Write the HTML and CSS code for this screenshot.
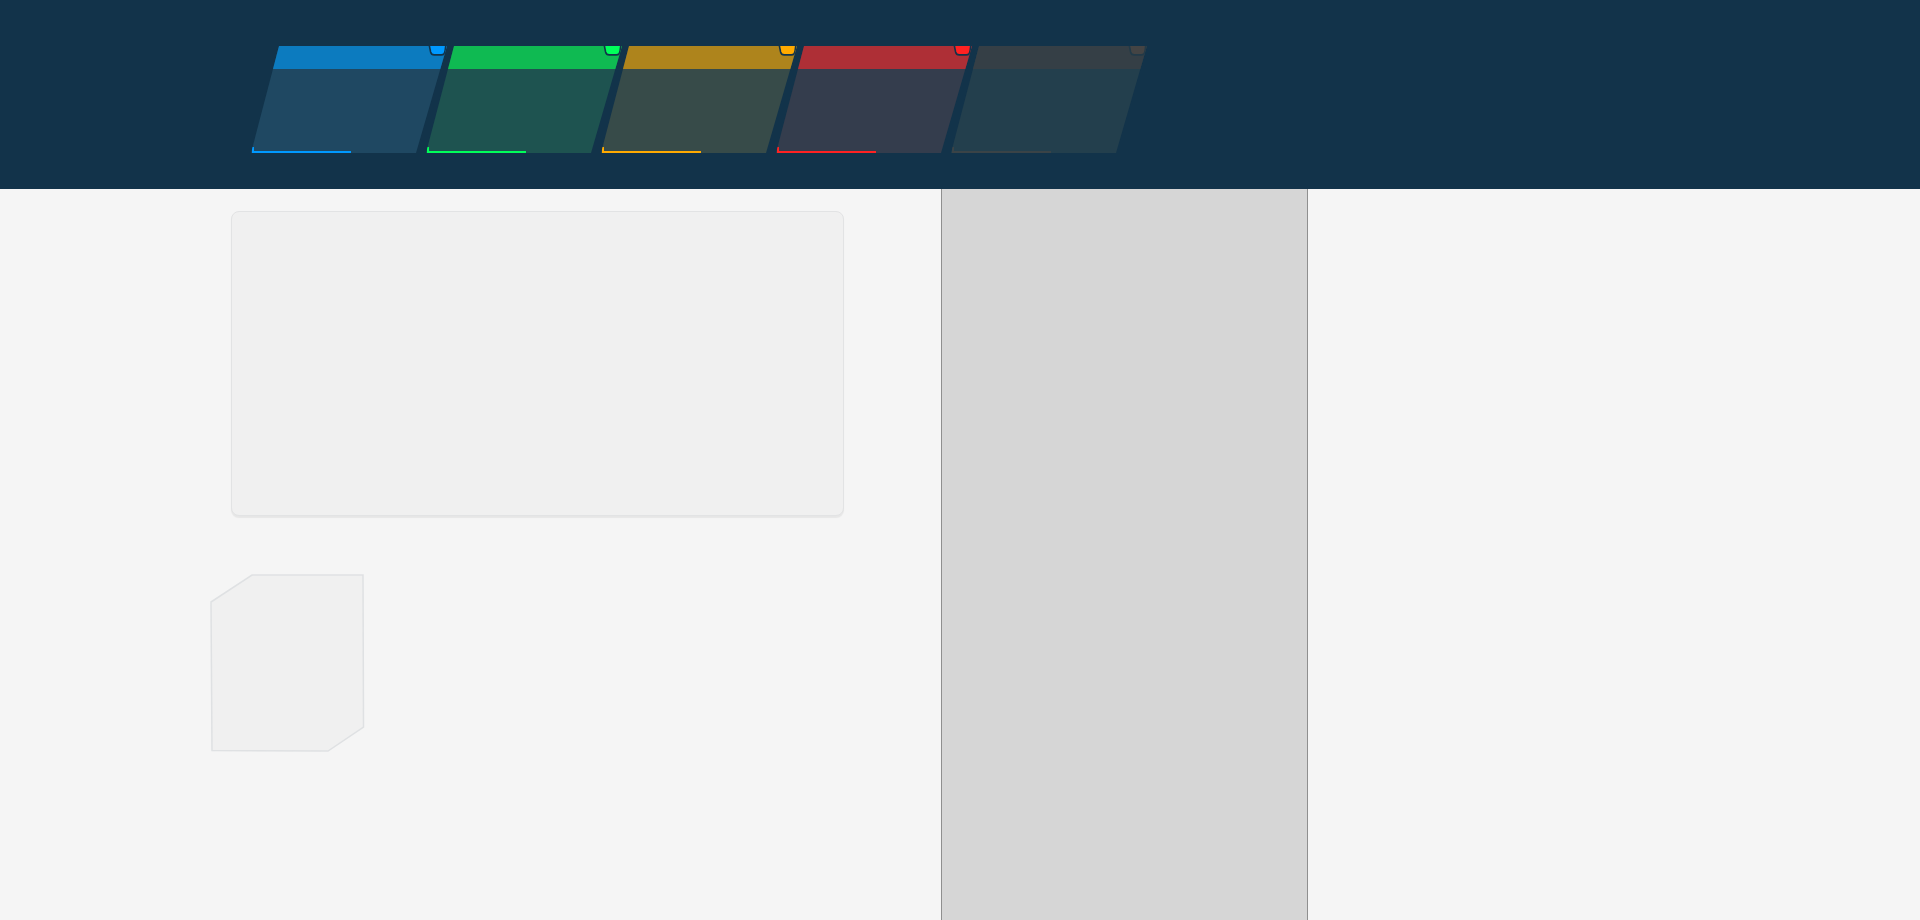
FILE: index.html
```html
<!DOCTYPE html>
<html lang="en">
<head>
<meta charset="utf-8">
<title>Dashboard</title>
<link rel="stylesheet" href="styles.css">
</head>
<body>
<header class="topbar">
  <nav class="tabs">
    <div class="tab tab-blue"><div class="tab-band"></div><svg class="tab-badge" viewBox="0 0 19 10"><path d="M1,-2 L2.6,6 Q3.3,8.9 6.2,8.9 L13.4,8.9 Q16.4,8.9 16.9,6 L18,-2 Z"/></svg><span class="tab-line"></span></div>
    <div class="tab tab-green"><div class="tab-band"></div><svg class="tab-badge" viewBox="0 0 19 10"><path d="M1,-2 L2.6,6 Q3.3,8.9 6.2,8.9 L13.4,8.9 Q16.4,8.9 16.9,6 L18,-2 Z"/></svg><span class="tab-line"></span></div>
    <div class="tab tab-yellow"><div class="tab-band"></div><svg class="tab-badge" viewBox="0 0 19 10"><path d="M1,-2 L2.6,6 Q3.3,8.9 6.2,8.9 L13.4,8.9 Q16.4,8.9 16.9,6 L18,-2 Z"/></svg><span class="tab-line"></span></div>
    <div class="tab tab-red"><div class="tab-band"></div><svg class="tab-badge" viewBox="0 0 19 10"><path d="M1,-2 L2.6,6 Q3.3,8.9 6.2,8.9 L13.4,8.9 Q16.4,8.9 16.9,6 L18,-2 Z"/></svg><span class="tab-line"></span></div>
    <div class="tab tab-grey"><div class="tab-band"></div><svg class="tab-badge" viewBox="0 0 19 10"><path d="M1,-2 L2.6,6 Q3.3,8.9 6.2,8.9 L13.4,8.9 Q16.4,8.9 16.9,6 L18,-2 Z"/></svg><span class="tab-line"></span></div>
  </nav>
</header>
<main class="layout">
  <section class="content">
    <div class="card"></div>
    <svg class="shape" width="156" height="178" viewBox="0 0 156 178">
      <polygon points="1,28 42,1 86,1 153,1 153.5,153 118,177 2,176.5" fill="#f0f0f0" stroke="#dfe1e3" stroke-width="1.5"/>
    </svg>
  </section>
  <aside class="sidebar"></aside>
  <section class="rest"></section>
</main>
</body>
</html>
```
FILE: styles.css
```css
html, body {
  margin: 0;
  padding: 0;
  height: 100%;
}
body {
  background: #f5f5f5;
  font-family: "Liberation Sans", Arial, sans-serif;
  display: flex;
  flex-direction: column;
  overflow: hidden;
}
.topbar {
  height: 189px;
  background: #12334a;
  flex: none;
  box-sizing: border-box;
  padding: 46px 0 0 251px;
}
.tabs {
  display: flex;
}
.tab {
  position: relative;
  flex: none;
  width: 196px;
  height: 107px;
  margin-right: -21px;
  clip-path: polygon(28px 0, 196px 0, 165px 107px, 0 107px);
}
.tab-band {
  height: 23px;
}
.tab-badge {
  position: absolute;
  top: 0;
  right: 0;
  width: 19px;
  height: 10px;
  stroke: #12334a;
  stroke-width: 1.6;
}
.tab-line {
  position: absolute;
  left: 1px;
  bottom: 0;
  width: 99px;
  height: 6px;
  box-sizing: border-box;
  border-left: 2px solid;
  border-bottom: 2px solid;
}
.tab-blue { background: #1f4862; }
.tab-blue .tab-band { background: #0c7bbf; }
.tab-blue .tab-badge { fill: #0099ff; }
.tab-blue .tab-line { border-color: #0099ff; }
.tab-green { background: #1e5350; }
.tab-green .tab-band { background: #0fba52; }
.tab-green .tab-badge { fill: #00ff5a; }
.tab-green .tab-line { border-color: #00ff5a; }
.tab-yellow { background: #374b49; }
.tab-yellow .tab-band { background: #ae841c; }
.tab-yellow .tab-badge { fill: #ffaa00; }
.tab-yellow .tab-line { border-color: #ffaa00; }
.tab-red { background: #343d4d; }
.tab-red .tab-band { background: #ae2f36; }
.tab-red .tab-badge { fill: #ff2222; }
.tab-red .tab-line { border-color: #ff2222; }
.tab-grey { background: #233f4d; }
.tab-grey .tab-band { background: #353f46; }
.tab-grey .tab-badge { fill: #444444; stroke: #223a48; }
.tab-grey .tab-line { border-color: #3a4347; }

.layout {
  flex: 1;
  display: flex;
  min-height: 0;
}
.content {
  width: 941px;
  flex: none;
  display: flex;
  flex-direction: column;
  align-items: flex-start;
}
.card {
  margin: 22px 0 0 231px;
  width: 613px;
  height: 305px;
  box-sizing: border-box;
  background: #f0f0f0;
  border: 1px solid #e2e3e4;
  border-radius: 8px;
  box-shadow: 0 2px 1px rgba(0, 0, 0, 0.06);
}
.shape {
  display: block;
  margin: 58px 0 0 210px;
}
.sidebar {
  width: 365px;
  flex: none;
  background: #d6d6d6;
  border-left: 1px solid #8f8f8f;
  border-right: 1px solid #8f8f8f;
}
.rest {
  flex: 1;
}
```
